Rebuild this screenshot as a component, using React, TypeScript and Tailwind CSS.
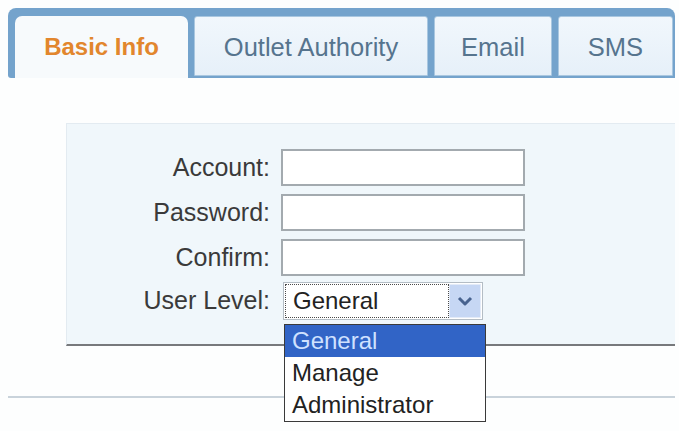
const font = { fontFamily: '"Liberation Sans", Arial, sans-serif' };

const tabs = [
  { label: 'Outlet Authority', width: 'w-[234px]' },
  { label: 'Email', width: 'w-[118px]' },
  { label: 'SMS', width: 'w-[115px]' },
];

const fields = ['Account:', 'Password:', 'Confirm:'];

const levels = ['General', 'Manage', 'Administrator'];

function TabBar() {
  return (
    <div className="ml-[8px] mt-[8px] flex h-[70px] w-[667px] items-end gap-[6px] rounded-t-[8px] rounded-bl-[3px] bg-[#74a3cc] pl-[7px] pr-[2px] pt-[8px]">
      <div className="flex h-full w-[173px] items-center justify-center rounded-t-[7px] bg-[#f7fafc] text-[24px] font-bold text-[#e2862d]">
        Basic Info
      </div>
      {tabs.map((t) => (
        <div
          key={t.label}
          className={`${t.width} mb-[2px] flex h-[60px] items-center justify-center rounded-t-[3px] border border-[#a9c7e0] bg-gradient-to-b from-[#f1f7fc] to-[#e6f0f9] pt-[2px] text-[25.5px] text-[#56748e]`}
        >
          {t.label}
        </div>
      ))}
    </div>
  );
}

function LevelSelect() {
  return (
    <div className="relative ml-[2px]">
      <div className="flex h-[38px] w-[200px] border border-[#b4bdc5] bg-white p-px">
        <div className="flex flex-1 items-center border border-dotted border-[#4a4a4a] pl-[7px] text-[24px] text-[#222]">
          General
        </div>
        <div className="flex w-[32px] items-center justify-center border border-[#e3ebf8] bg-[#c6d7f4]">
          {/* dropdown chevron */}
          <svg width="16" height="10" viewBox="0 0 16 10" fill="none">
            <path d="M2 2 L8 8 L14 2" stroke="#48638f" strokeWidth="3" strokeLinejoin="round" />
          </svg>
        </div>
      </div>
      <div className="absolute left-[1px] top-[42px] w-[202px] border border-[#3a3a3a] bg-white">
        {levels.map((l, i) => (
          <div
            key={l}
            className={`flex h-[32px] items-center pl-[7px] text-[24px] ${
              i === 0 ? 'bg-[#3164c6] text-[#cfe1ff]' : 'text-[#222]'
            }`}
          >
            {l}
          </div>
        ))}
      </div>
    </div>
  );
}

export default function App() {
  return (
    <div className="h-[431px] w-[679px] overflow-hidden bg-[#fdfefe]" style={font}>
      <TabBar />

      <div className="ml-[66px] mt-[45px] h-[223px] w-[609px] border-b-2 border-l border-t border-b-[#77797c] border-l-[#e3ebf1] border-t-[#e3ebf1] bg-[#f0f7fb] pt-[25px]">
        <div className="flex flex-col gap-[8px]">
          {fields.map((f) => (
            <div key={f} className="flex h-[37px] items-center">
              <label className="w-[203px] text-right text-[25px] text-[#3a3a3a]">{f}</label>
              <input
                type={f === 'Account:' ? 'text' : 'password'}
                className="ml-[11px] h-[37px] w-[244px] border-2 border-[#a3aaaf] bg-white outline-none"
              />
            </div>
          ))}
          <div className="mt-[-2px] flex h-[38px] items-center">
            <label className="w-[203px] text-right text-[25px] text-[#3a3a3a]">User Level:</label>
            <div className="ml-[11px]">
              <LevelSelect />
            </div>
          </div>
        </div>
      </div>

      <div className="ml-[8px] mt-[50px] h-[2px] w-[667px] bg-[#c9d3db]" />
    </div>
  );
}
